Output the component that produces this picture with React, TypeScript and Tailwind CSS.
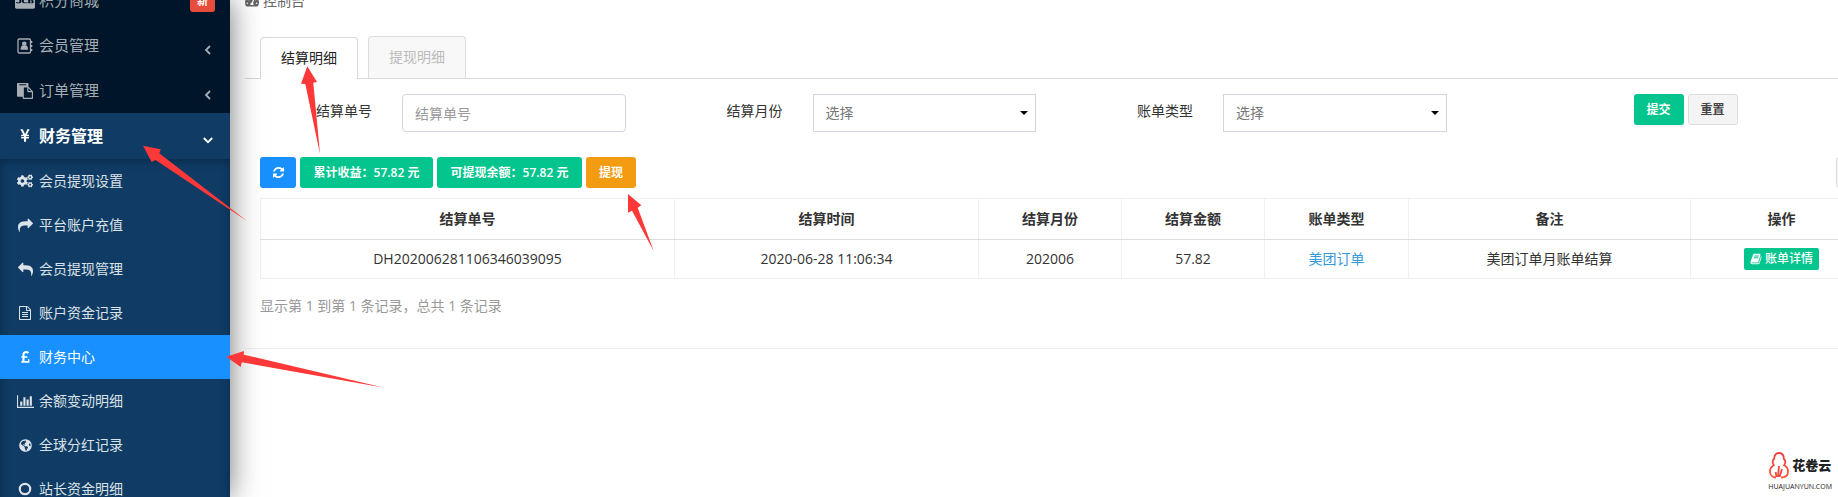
import type { ReactNode } from "react";
import { FaCcJcb, FaCogs, FaGlobeAmericas, FaTachometerAlt } from "react-icons/fa";

// --- Icons ---

const PATHS = {
  paste:
    "M768 1664h896v-640h-416q-40 0-68-28t-28-68v-416h-384v1152zm256-1440v-64q0-13-9.5-22.5t-22.5-9.5h-704q-13 0-22.5 9.5t-9.5 22.5v64q0 13 9.5 22.5t22.5 9.5h704q13 0 22.5-9.5t9.5-22.5zm256 672h299l-299-299v299zm512 128v672q0 40-28 68t-68 28h-960q-40 0-68-28t-28-68v-160h-544q-40 0-68-28t-28-68v-1344q0-40 28-68t68-28h1088q40 0 68 28t28 68v328q21 13 36 28l408 408q28 28 48 76t20 88z",
  yen: "M985.5 1536h-172q-13 0-22.5-9t-9.5-23v-330h-288q-13 0-22.5-9t-9.5-23v-103q0-13 9.5-22.5t22.5-9.5h288v-85h-288q-13 0-22.5-9t-9.5-23v-104q0-13 9.5-22.5t22.5-9.5h214l-321-578q-8-16 0-32 10-16 28-16h194q19 0 29 18l215 425q19 38 56 125 10-24 30.5-68t27.5-61l191-420q8-19 29-19h191q17 0 27 16 9 14 1 31l-313 579h215q13 0 22.5 9.5t9.5 22.5v104q0 14-9.5 23t-22.5 9h-290v85h290q13 0 22.5 9.5t9.5 22.5v103q0 14-9.5 23t-22.5 9h-290v330q0 13-9.5 22.5t-22.5 9.5z",
  share:
    "M1792 640q0 26-19 45l-512 512q-19 19-45 19t-45-19-19-45v-256h-224q-98 0-175.5 6t-154 21.5-133 42.5-105.5 69.5-80 101-48.5 138.5-17.5 181q0 55 5 123 0 6 2.5 23.5t2.5 26.5q0 15-8.5 25t-23.5 10q-16 0-28-17-7-9-13-22t-13.5-30-10.5-24q-127-285-127-451 0-199 53-333 162-403 875-403h224v-256q0-26 19-45t45-19 45 19l512 512q19 19 19 45z",
  file: "M1596 380q28 28 48 76t20 88v1152q0 40-28 68t-68 28h-1344q-40 0-68-28t-28-68v-1600q0-40 28-68t68-28h896q40 0 88 20t76 48zm-444-244v376h376q-10-29-22-41l-313-313q-12-12-41-22zm384 1528v-1024h-416q-40 0-68-28t-28-68v-416h-768v1536h1280zm-1024-864q0-14 9-23t23-9h704q14 0 23 9t9 23v64q0 14-9 23t-23 9h-704q-14 0-23-9t-9-23v-64zm736 224q14 0 23 9t9 23v64q0 14-9 23t-23 9h-704q-14 0-23-9t-9-23v-64q0-14 9-23t23-9h704zm0 256q14 0 23 9t9 23v64q0 14-9 23t-23 9h-704q-14 0-23-9t-9-23v-64q0-14 9-23t23-9h704z",
  pound:
    "M1360 1085v419q0 14-9 23t-23 9h-896q-14 0-23-9t-9-23v-150q0-13 9.5-22.5t22.5-9.5h97v-383h-95q-14 0-23-9.5t-9-22.5v-131q0-14 9-23t23-9h95v-223q0-171 123.5-282t314.5-111q185 0 335 125 9 8 10 20.5t-7 22.5l-103 127q-9 11-22 12-13 2-23-7-5-5-26-19t-69-32-93-18q-85 0-137 47t-52 123v215h305q13 0 22.5 9t9.5 23v131q0 13-9.5 22.5t-22.5 9.5h-305v379h414v-181q0-13 9-22.5t23-9.5h162q14 0 23 9.5t9 22.5z",
  refresh:
    "M1639 1056q0 5-1 7-64 268-268 434.5t-478 166.5q-146 0-282.5-55t-243.5-157l-129 129q-19 19-45 19t-45-19-19-45v-448q0-26 19-45t45-19h448q26 0 45 19t19 45-19 45l-137 137q71 66 161 102t187 36q134 0 250-65t186-179q11-17 53-117 8-23 30-23h192q13 0 22.5 9.5t9.5 22.5zm25-800v448q0 26-19 45t-45 19h-448q-26 0-45-19t-19-45 19-45l138-138q-148-137-349-137-134 0-250 65t-186 179q-11 17-53 117-8 23-30 23h-199q-13 0-22.5-9.5t-9.5-22.5v-7q65-268 270-434.5t480-166.5q146 0 284 55.5t245 156.5l130-129q19-19 45-19t45 19 19 45z",
  book: "M1703 478q40 57 18 129l-275 906q-19 64-76.5 107.5t-122.5 43.5h-923q-77 0-148.5-53.5t-99.5-131.5q-24-67-2-127 0-4 3-27t4-37q1-8-3-21.5t-3-19.5q2-11 8-21t16.5-23.5 16.5-23.5q23-38 45-91.5t30-91.5q3-10 .5-30t-.5-28q3-11 17-28t17-23q21-36 42-92t25-90q1-9-2.5-32t.5-28q4-13 22-30.5t22-22.5q19-26 42.5-84.5t27.5-96.5q1-8-3-25.5t-2-26.5q2-8 9-18t18-23 17-21q8-12 16.5-30.5t15-35 16-36 19.5-32 26.5-23.5 36-11.5 47.5 5.5l-1 3q38-9 51-9h761q74 0 114 56t18 130l-274 906q-36 119-71.5 153.5t-128.5 34.5h-869q-27 0-38 15-11 16-1 43 24 70 144 70h923q29 0 56-15.5t35-41.5l300-987q7-22 5-57 38 15 59 43zm-1064 2q-4 13 2 22.5t20 9.5h608q13 0 25.5-9.5t16.5-22.5l21-64q4-13-2-22.5t-20-9.5h-608q-13 0-25.5 9.5t-16.5 22.5zm-83 256q-4 13 2 22.5t20 9.5h608q13 0 25.5-9.5t16.5-22.5l21-64q4-13-2-22.5t-20-9.5h-608q-13 0-25.5 9.5t-16.5 22.5z",
};

function Icon({ name, className = "size-4" }: { name: keyof typeof PATHS; className?: string }) {
  return (
    <svg viewBox="0 0 1792 1792" fill="currentColor" className={className} aria-hidden="true">
      <path d={PATHS[name]} />
    </svg>
  );
}

function AddressBookIcon() {
  return (
    <svg viewBox="0 0 16 16" className="size-4" fill="none" aria-hidden="true">
      <rect x="1" y="1" width="12.500" height="14" rx="1.200" stroke="currentColor" strokeWidth="1.300" />
      <path d="M14.500 3v2M14.500 7v2M14.500 11v2" stroke="currentColor" strokeWidth="1.600" />
      <circle cx="7.300" cy="5.800" r="2.300" fill="currentColor" />
      <path d="M3.500 11.800c0-2.800 1-4.300 2.200-4.300h3.200c1.200 0 2.200 1.500 2.200 4.300z" fill="currentColor" />
    </svg>
  );
}

function BarChartIcon() {
  return (
    <svg viewBox="0 0 2048 1792" fill="currentColor" className="h-[15px] w-[17px]" aria-hidden="true">
      <path d="M640 896v512h-256v-512h256zm384-512v1024h-256v-1024h256zm1024 1152v128h-2048v-1536h128v1408h1920zm-640-896v768h-256v-768h256zm384-384v1152h-256v-1152h256z" />
    </svg>
  );
}

function CircleIcon() {
  return (
    <svg viewBox="0 0 14 14" className="size-[14px]" fill="none" stroke="currentColor" strokeWidth="2.2" aria-hidden="true">
      <circle cx="7" cy="7" r="5.2" />
    </svg>
  );
}

function Chevron({ open }: { open?: boolean }) {
  return (
    <svg viewBox="0 0 12 12" className="size-3" fill="none" stroke="currentColor" strokeWidth="1.8" aria-hidden="true">
      <path d={open ? "M1.8 4l4.2 4.2L10.2 4" : "M8 2L4 6l4 4"} />
    </svg>
  );
}

// --- Data ---

const subMenu: { label: string; icon: ReactNode; active?: boolean }[] = [
  { label: "会员提现设置", icon: <FaCogs className="size-4" /> },
  { label: "平台账户充值", icon: <Icon name="share" className="size-[15px]" /> },
  { label: "会员提现管理", icon: <Icon name="share" className="size-[15px] -scale-x-100" /> },
  { label: "账户资金记录", icon: <Icon name="file" className="size-[14px]" /> },
  { label: "财务中心", icon: <Icon name="pound" className="size-[15px]" />, active: true },
  { label: "余额变动明细", icon: <BarChartIcon /> },
  { label: "全球分红记录", icon: <FaGlobeAmericas className="size-[13px]" /> },
  { label: "站长资金明细", icon: <CircleIcon /> },
];

const columns = [
  { title: "结算单号", width: "w-[414px]" },
  { title: "结算时间", width: "w-[304px]" },
  { title: "结算月份", width: "w-[143px]" },
  { title: "结算金额", width: "w-[143px]" },
  { title: "账单类型", width: "w-[144px]" },
  { title: "备注", width: "w-[282px]" },
  { title: "操作", width: "w-[182px]" },
];

const rows = [
  {
    no: "DH202006281106346039095",
    time: "2020-06-28 11:06:34",
    month: "202006",
    amount: "57.82",
    type: "美团订单",
    remark: "美团订单月账单结算",
  },
];

// --- Sidebar ---

function MenuRow({ icon, label, children }: { icon: ReactNode; label: string; children?: ReactNode }) {
  return (
    <a href="#" className="flex h-[45px] items-center pr-4 pl-[15px] text-[15px] text-[#a6adb4]">
      <span className="mr-1 flex w-5 justify-center">{icon}</span>
      <span className="flex-1">{label}</span>
      {children}
    </a>
  );
}

function Sidebar() {
  return (
    <aside className="z-10 w-[230px] shrink-0 overflow-hidden bg-[#001529] shadow-[0_0_28px_rgba(0,0,0,0.55)]">
      <nav className="-mt-[22px]">
        <MenuRow icon={<FaCcJcb className="size-5" />} label="积分商城">
          <span className="-mr-px rounded-[3px] bg-[#e74c3c] px-[7px] text-[11px] leading-[22px] font-bold text-white">新</span>
        </MenuRow>
        <MenuRow icon={<AddressBookIcon />} label="会员管理">
          <span className="pt-2">
            <Chevron />
          </span>
        </MenuRow>
        <MenuRow icon={<Icon name="paste" />} label="订单管理">
          <span className="pt-2">
            <Chevron />
          </span>
        </MenuRow>
        <a href="#" className="flex h-[46px] items-center bg-[#0f3b64] pr-4 pl-[15px] text-base font-bold text-white">
          <span className="mr-1 flex w-5 justify-center">
            <Icon name="yen" />
          </span>
          <span className="flex-1">财务管理</span>
          <span className="pt-2">
            <Chevron open />
          </span>
        </a>
        <ul className="bg-[#0f3b64] shadow-[inset_0_2px_8px_rgba(0,21,41,0.45)]">
          {subMenu.map((item) => (
            <li key={item.label}>
              <a
                href="#"
                className={`flex h-11 items-center pl-[15px] text-sm ${
                  item.active ? "bg-[#1890ff] text-white" : "text-[#dbe2e8]"
                }`}
              >
                <span className="mr-1 flex w-5 justify-center">{item.icon}</span>
                {item.label}
              </a>
            </li>
          ))}
        </ul>
      </nav>
    </aside>
  );
}

// --- Search form ---

function Field({ id, label, children }: { id: string; label: string; children: ReactNode }) {
  return (
    <div className="flex items-start gap-[30px] pr-[30px]">
      <label htmlFor={id} className="w-[127px] shrink-0 pt-[7px] text-right leading-5 text-[#333]">
        {label}
      </label>
      {children}
    </div>
  );
}

function SelectBox({ id }: { id: string }) {
  return (
    <div className="relative flex-1">
      <select
        id={id}
        className="h-[38px] w-full appearance-none border border-[#d2d6de] bg-white px-3 text-sm text-[#777]"
      >
        <option>选择</option>
      </select>
      <svg viewBox="0 0 8 4" className="pointer-events-none absolute top-[17px] right-2 h-1 w-2" aria-hidden="true">
        <path d="M0 0h8L4 4z" fill="#000" />
      </svg>
    </div>
  );
}

function SearchForm() {
  return (
    <form className="grid grid-cols-4 pt-[15px]">
      <Field id="bill-no" label="结算单号">
        <input
          id="bill-no"
          type="text"
          placeholder="结算单号"
          className="h-[38px] min-w-0 flex-1 rounded-[4px] border border-[#d2d6de] px-3 text-sm placeholder:text-[#999]"
        />
      </Field>
      <Field id="bill-month" label="结算月份">
        <SelectBox id="bill-month" />
      </Field>
      <Field id="bill-type" label="账单类型">
        <SelectBox id="bill-type" />
      </Field>
      <div className="flex items-start gap-1 pl-[157px] text-xs font-bold">
        <button type="button" className="h-[31px] w-[50px] rounded-[3px] bg-[#04c58e] text-white shadow-[0_2px_0_rgba(0,0,0,0.04)]">
          提交
        </button>
        <button type="button" className="h-[31px] w-[50px] rounded-[3px] border border-[#ddd] bg-[#f4f4f4] text-[#444]">
          重置
        </button>
      </div>
    </form>
  );
}

// --- Table ---

function BillTable() {
  return (
    <table className="mt-[10px] w-full table-fixed border-collapse text-center text-[#333]">
      <thead>
        <tr className="h-[41px]">
          {columns.map((col) => (
            <th key={col.title} className={`border border-b-[#ddd] border-[#f0f0f0] font-bold ${col.width}`}>
              {col.title}
            </th>
          ))}
        </tr>
      </thead>
      <tbody>
        {rows.map((row) => (
          <tr key={row.no} className="h-[39px] *:border *:border-[#f0f0f0] *:border-t-[#ddd]">
            <td>{row.no}</td>
            <td>{row.time}</td>
            <td>{row.month}</td>
            <td>{row.amount}</td>
            <td>
              <a href="#" className="text-[#3498db]">
                {row.type}
              </a>
            </td>
            <td>{row.remark}</td>
            <td>
              <button
                type="button"
                className="inline-flex h-[22px] items-center gap-[3px] rounded-[2px] bg-[#04c58e] px-[6px] align-middle text-xs font-medium text-white"
              >
                <Icon name="book" className="size-3" />
                账单详情
              </button>
            </td>
          </tr>
        ))}
      </tbody>
    </table>
  );
}

// --- Overlays ---

function Arrows() {
  return (
    <svg className="pointer-events-none absolute top-0 left-0 z-20 h-[400px] w-[700px]" viewBox="0 0 700 400" fill="#fd3838" aria-hidden="true">
      <path d="M307.3 66.3L317 82l-3.700.7L320 154 305.300 84l-4.300-.3z" />
      <path d="M143 145.700l17.700 3.600-1.400 4L247 221l-91.500-61-3.800 2z" />
      <path d="M226.300 356.700L244 351l-.3 3.700 140.600 33-142.600-25.400-1 4.700z" />
      <path d="M628 194l13.300 11.300-3.600 2.400 16 43.300-21.700-40.300-4 2z" />
    </svg>
  );
}

function BrandLogo() {
  return (
    <div className="absolute right-[6px] bottom-[6px] z-20 flex flex-col items-center gap-1 text-[#222]">
      <div className="flex items-center gap-[3px]">
        <svg viewBox="0 0 20 28" className="h-7 w-5" fill="none" aria-hidden="true">
          <defs>
            <linearGradient id="brand" x1="0" y1="0" x2="0" y2="1">
              <stop offset="0" stopColor="#f2363c" />
              <stop offset="1" stopColor="#ff5a3c" />
            </linearGradient>
          </defs>
          <path
            d="M7 26.500C3.500 26.500 1 24 1 20.500c0-3 1.300-5 3.800-6.200C2.800 11 4 8.800 5.200 7.800 5.200 4 7 2 10 2s4.800 2 4.800 5.800c1.200 1 2.400 3.200.4 6.500C17.700 15.500 19 17.500 19 20.500c0 3.500-2.500 6-7 6"
            stroke="url(#brand)"
            strokeWidth="1.800"
          />
          <path d="M7.500 26l-.8-5M9 26l1-11M10.500 26l2.500-8" stroke="#f4473f" strokeWidth="1.800" />
        </svg>
        <span className="text-[13px] leading-6 font-black">花卷云</span>
      </div>
      <span className="text-[7px] leading-[8px]">HUAJUANYUN.COM</span>
    </div>
  );
}

const toolbarButton = "flex h-[31px] items-center justify-center rounded-[3px] text-white";

export default function App() {
  return (
    <div className="relative flex h-screen overflow-hidden bg-white font-['Open_Sans','Noto_Sans_CJK_SC',sans-serif] text-sm">
      <Sidebar />
      <main className="-mr-[49px] min-w-0 flex-1 pl-[15px]">
        <div className="-mt-[10px] flex h-[22px] items-center gap-1 text-[#666]">
          <FaTachometerAlt className="size-[14px]" />
          控制台
        </div>

        <section className="border-b border-[#eee] pb-8">
          <div role="tablist" className="flex items-end gap-[10px] border-b border-[#d9d9d9] pt-6 pl-[15px]">
            <button
              type="button"
              role="tab"
              aria-selected="true"
              className="-mb-px h-[42px] rounded-t-[4px] border border-b-0 border-[#d9d9d9] bg-white px-5 pb-[2px] text-[#222]"
            >
              结算明细
            </button>
            <button
              type="button"
              role="tab"
              aria-selected="false"
              className="h-[42px] rounded-t-[4px] border border-b-0 border-[#ddd] bg-[#f8f8f8] px-5 pb-[2px] text-[#bbb]"
            >
              提现明细
            </button>
          </div>

          <SearchForm />

          <div className="px-[15px] pt-[25px]">
            <div className="flex gap-1 text-xs font-semibold">
              <button type="button" aria-label="刷新" className={`${toolbarButton} w-9 bg-[#1890ff]`}>
                <Icon name="refresh" className="size-[13px] shrink-0" />
              </button>
              <button type="button" className={`${toolbarButton} w-[133px] bg-[#04c58e]`}>
                累计收益：57.82 元
              </button>
              <button type="button" className={`${toolbarButton} w-[145px] bg-[#04c58e]`}>
                可提现余额：57.82 元
              </button>
              <button type="button" className={`${toolbarButton} w-[50px] bg-[#f39c12]`}>
                提现
              </button>
              <button
                type="button"
                aria-label="搜索"
                className="ml-auto h-[31px] w-9 rounded-[3px] border border-[#ddd] bg-[#f4f4f4]"
              />
            </div>
            <BillTable />
            <p className="pt-[17px] leading-5 text-[#999]">显示第 1 到第 1 条记录，总共 1 条记录</p>
          </div>
        </section>
      </main>
      <Arrows />
      <BrandLogo />
    </div>
  );
}
